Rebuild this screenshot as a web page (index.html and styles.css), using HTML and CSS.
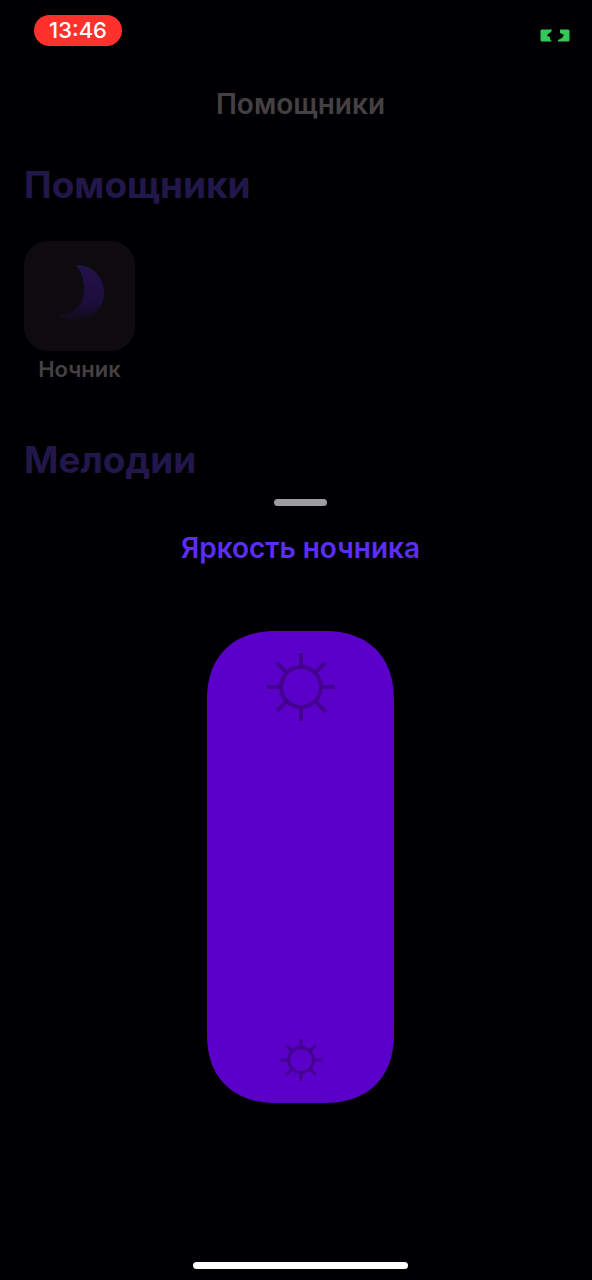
FILE: index.html
```html
<!DOCTYPE html>
<html lang="ru">
<head>
<meta charset="utf-8">
<meta name="viewport" content="width=device-width, initial-scale=1">
<title>Помощники</title>
<link rel="stylesheet" href="styles.css">
</head>
<body>
<div class="status-bar">
  <time class="clock">13:46</time>
  <svg class="battery" viewBox="0 0 30 13" role="img" aria-label="Зарядка">
    <path fill="#34c759" d="M2 0.500H12L11 3L8 5L7 7L10 8V10L12 12.500H2Q0.500 12.500 0.500 11V2Q0.500 0.500 2 0.500Z"/>
    <path fill="#34c759" d="M20 0.500H28Q29.500 0.500 29.500 2V11Q29.500 12.500 28 12.500H18V11L22 9L24 6L20 4Z"/>
  </svg>
</div>
<main class="page">
  <h1 class="page-title">Помощники</h1>
  <h2 class="section-title">Помощники</h2>
  <button class="helper" type="button">
    <span class="tile">
      <svg class="moon" viewBox="0 0 48 58" aria-hidden="true">
        <defs>
          <linearGradient id="moon-fill" x1="0" y1="0" x2="0" y2="1">
            <stop offset="0" stop-color="#24124c"/>
            <stop offset="0.7" stop-color="#1b0d3a"/>
            <stop offset="1" stop-color="#100b18"/>
          </linearGradient>
        </defs>
        <path fill="url(#moon-fill)" d="M19 1C37 1 47 14 47 29C47 45 35 56 18 56C12 56 6 55 1 51C18 51 27 40 27 25C27 15 24 7 19 1Z"/>
      </svg>
    </span>
    <span class="helper-name">Ночник</span>
  </button>
  <h2 class="section-title melodies">Мелодии</h2>
</main>
<section class="sheet" aria-labelledby="sheet-title">
  <span class="grabber"></span>
  <label class="sheet-title" id="sheet-title" for="brightness">Яркость ночника</label>
  <div class="slider">
    <input class="slider-input" id="brightness" type="range" min="0" max="100" value="100">
    <div class="slider-icons">
      <svg class="sun-large" viewBox="0 0 68 68" aria-hidden="true">
        <g class="rays">
          <circle cx="34" cy="34" r="20"/>
          <path d="M34 0V14M34 54V68M0 34H14M54 34H68M10 10L20 20M48 20L58 10M10 58L20 48M48 48L59 59"/>
        </g>
      </svg>
      <svg class="sun-small" viewBox="0 0 68 68" aria-hidden="true">
        <g class="rays rays-bold">
          <circle cx="34" cy="34" r="20"/>
          <path d="M34 0V14M34 54V68M0 34H14M54 34H68M10 10L20 20M48 20L58 10M10 58L20 48M48 48L58 58"/>
        </g>
      </svg>
    </div>
  </div>
</section>
<div class="home-bar"></div>
</body>
</html>
```
FILE: styles.css
```css
* {
  box-sizing: border-box;
}

body {
  margin: 0;
  min-height: 100vh;
  padding-left: 9px;
  display: flex;
  flex-direction: column;
  background: #000002;
  font-family: Inter, "Noto Sans", sans-serif;
}

h1,
h2 {
  margin: 0;
}

.status-bar {
  display: flex;
  justify-content: space-between;
  align-items: flex-start;
  padding: 15px 22px 0 25px;
}

.clock {
  width: 88px;
  border-radius: 16px;
  background: #ff312c;
  color: #fff;
  font-size: 22px;
  font-weight: 500;
  line-height: 31px;
  text-align: center;
}

.battery {
  width: 30px;
  height: 13px;
  margin-top: 14px;
}

.page {
  display: flex;
  flex-direction: column;
  align-items: flex-start;
  padding: 42px 15px 0;
}

.page-title {
  align-self: center;
  color: #444043;
  font-size: 28px;
  font-weight: 600;
  line-height: 32px;
}

.section-title {
  margin-top: 43px;
  color: #21174a;
  font-size: 37px;
  font-weight: 700;
  line-height: 44px;
}

.helper {
  display: flex;
  flex-direction: column;
  align-items: center;
  gap: 5px;
  margin-top: 34px;
  padding: 0;
  border: 0;
  background: none;
  font-family: inherit;
}

.tile {
  width: 111px;
  height: 110px;
  display: flex;
  align-items: center;
  justify-content: center;
  padding: 0 0 6px 2px;
  border-radius: 24px;
  background: #0d0b0e;
}

.moon {
  width: 48px;
  height: 58px;
}

.helper-name {
  color: #444043;
  font-size: 22px;
  font-weight: 600;
  line-height: 26px;
}

.melodies {
  margin-top: 56px;
}

.sheet {
  display: flex;
  flex-direction: column;
  align-items: center;
  padding-top: 17px;
}

.grabber {
  width: 53px;
  height: 7px;
  border-radius: 4px;
  background: #9f9c9f;
}

.sheet-title {
  margin-top: 26px;
  color: #5b2df5;
  font-size: 28px;
  font-weight: 600;
  line-height: 32px;
}

.slider {
  display: grid;
  width: 187px;
  height: 472px;
  margin-top: 67px;
}

.slider-input,
.slider-icons {
  grid-area: 1 / 1;
}

.slider-input {
  appearance: none;
  writing-mode: vertical-lr;
  direction: rtl;
  width: 100%;
  height: 100%;
  margin: 0;
  border-radius: 62px;
  background: #5b00c9;
}

@supports (corner-shape: superellipse(1.2)) {
  .slider-input {
    border-radius: 70px;
    corner-shape: superellipse(1.2);
  }
}

.slider-input::-webkit-slider-thumb {
  appearance: none;
  width: 1px;
  height: 1px;
}

.slider-icons {
  display: flex;
  flex-direction: column;
  align-items: center;
  justify-content: space-between;
  padding: 22px 0;
  pointer-events: none;
}

.rays {
  fill: none;
  stroke: #44008f;
  stroke-width: 4;
}

.rays-bold {
  stroke-width: 5;
}

.sun-large {
  width: 68px;
  height: 68px;
}

.sun-small {
  width: 42px;
  height: 42px;
}

.home-bar {
  align-self: center;
  width: 215px;
  height: 7px;
  margin: auto 0 11px;
  border-radius: 4px;
  background: #fff;
}
```
